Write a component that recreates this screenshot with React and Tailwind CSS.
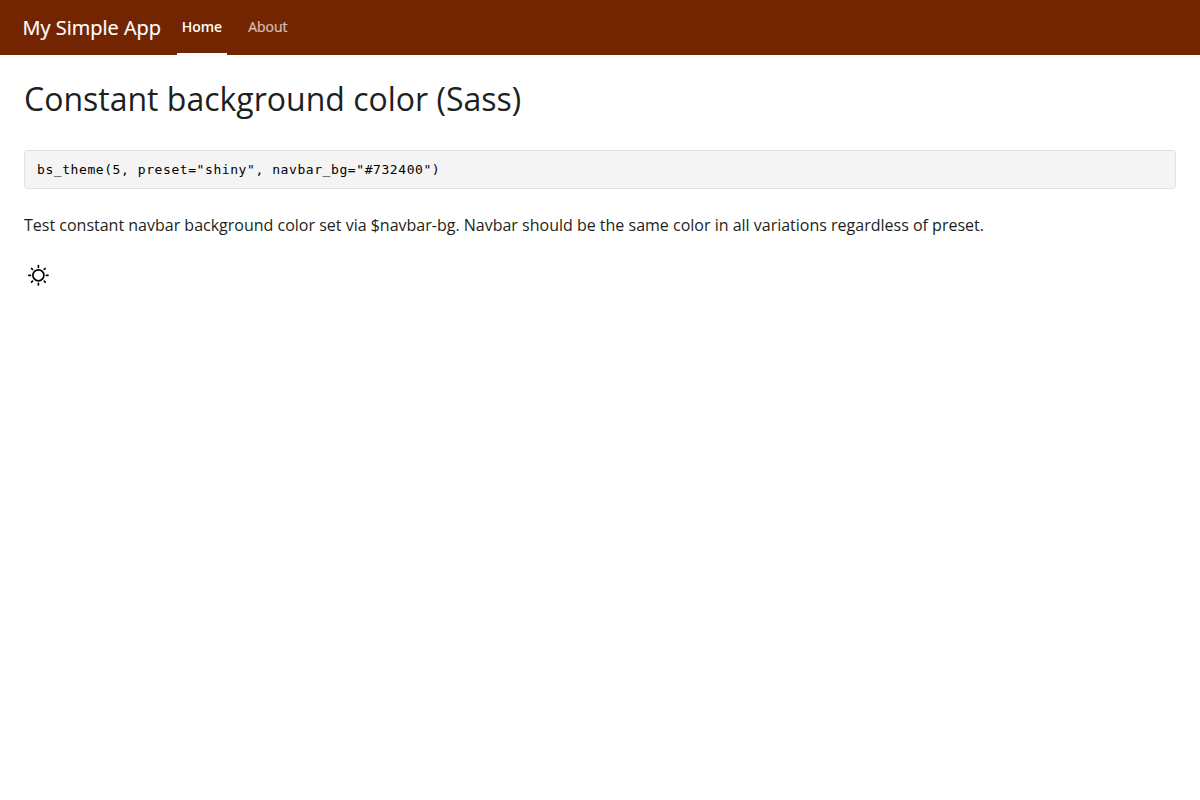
export default function App() {
  return (
    <div className="min-h-screen bg-white font-['Open_Sans',sans-serif] text-[#1d1f21]">
      <nav className="flex h-[55px] items-stretch bg-[#732400] pl-[22.5px] text-white">
        <a className="flex items-center text-[20px] leading-[30px] [-webkit-text-stroke:0.2px_currentColor]">My Simple App</a>
        <ul className="ml-[15.6px] flex gap-4 text-[14px]">
          <li className="flex items-center border-b-2 border-white px-[5px] font-semibold">Home</li>
          <li className="flex items-center border-b-2 border-transparent px-[5px] text-white/65 [-webkit-text-stroke:0.2px_currentColor]">About</li>
        </ul>
      </nav>
      <main className="px-6 pt-6">
        <h1 className="text-[32px] leading-[40px]">Constant background color (Sass)</h1>
        <pre className="mt-[31px] h-[39px] rounded-[3px] border border-[#dee2e6] bg-[#f4f4f4] px-3 font-['DejaVu_Sans_Mono',monospace] text-[13px] leading-[37px] tracking-[0.574px] text-black">{'bs_theme(5, preset="shiny", navbar_bg="#732400")'}</pre>
        <p className="mt-6 text-[16px] leading-6">Test constant navbar background color set via $navbar-bg. Navbar should be the same color in all variations regardless of preset.</p>
        <button className="mt-6 flex h-7 w-7 items-center justify-center text-black">
          <svg viewBox="-0.4 0 24 24" width="24" height="24" fill="none" stroke="currentColor" strokeWidth="1.7" strokeLinecap="round">
            <circle cx="12" cy="12.3" r="5.5" />
            <path d="M12 2.7v1.6M12 20.3v1.6M2.4 12.3h1.6M20 12.3h1.6M5.2 5.5l.9 .9M17.9 18.2l.9 .9M5.2 19.1l.9-.9M17.9 6.4l.9-.9" />
          </svg>
        </button>
      </main>
    </div>
  );
}
